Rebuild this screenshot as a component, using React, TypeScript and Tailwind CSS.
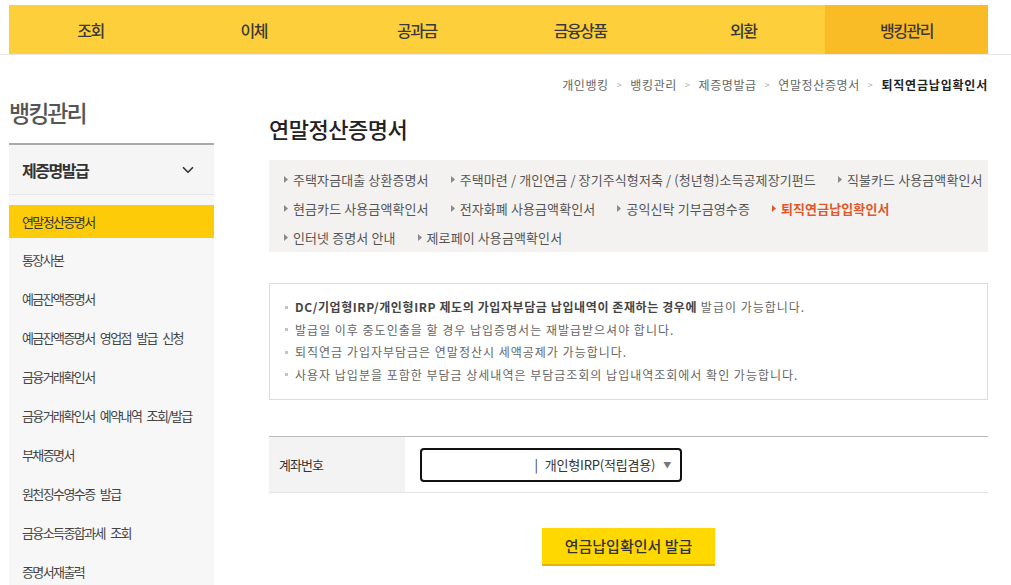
import { ChevronDown } from "lucide-react";

const navTabs = ["조회", "이체", "공과금", "금융상품", "외환", "뱅킹관리"];

const crumbs = ["개인뱅킹", "뱅킹관리", "제증명발급", "연말정산증명서"];

const sideMenu = [
  "통장사본",
  "예금잔액증명서",
  "예금잔액증명서 영업점 발급 신청",
  "금융거래확인서",
  "금융거래확인서 예약내역 조회/발급",
  "부채증명서",
  "원천징수영수증 발급",
  "금융소득종합과세 조회",
  "증명서재출력",
];

const certRows: string[][] = [
  ["주택자금대출 상환증명서", "주택마련 / 개인연금 / 장기주식형저축 / (청년형)소득공제장기펀드", "직불카드 사용금액확인서"],
  ["현금카드 사용금액확인서", "전자화폐 사용금액확인서", "공익신탁 기부금영수증", "퇴직연금납입확인서"],
  ["인터넷 증명서 안내", "제로페이 사용금액확인서"],
];

const notices = [
  "발급일 이후 중도인출을 할 경우 납입증명서는 재발급받으셔야 합니다.",
  "퇴직연금 가입자부담금은 연말정산시 세액공제가 가능합니다.",
  "사용자 납입분을 포함한 부담금 상세내역은 부담금조회의 납입내역조회에서 확인 가능합니다.",
];

function Arrow({ active }: { active?: boolean }) {
  return (
    <svg width="4" height="7" viewBox="0 0 4 7" className="shrink-0">
      <path d="M0 0 L4 3.5 L0 7 Z" fill={active ? "#e2582a" : "#8a8a8a"} />
    </svg>
  );
}

function Bullet() {
  return <span className="w-[3px] h-[3px] bg-[#c4c4c4] shrink-0" />;
}

export default function App() {
  return (
    <div className="w-[1011px] h-[585px] overflow-hidden bg-white text-[#333] font-['Noto_Sans_CJK_KR',sans-serif]">
      {/* top menu */}
      <div className="h-[55px] pt-[5px] border-b border-[#e8e8e8]">
        <nav className="ml-[9px] w-[979px] h-[49px] flex bg-[#fdd03b]">
          {navTabs.map((t) => (
            <div
              key={t}
              className={`flex-1 flex items-center justify-center text-[16px] font-medium tracking-[-1.5px] text-[#3a3a3a] ${
                t === "뱅킹관리" ? "bg-[#f9bb26]" : ""
              }`}
            >
              {t}
            </div>
          ))}
        </nav>
      </div>

      <div className="flex pl-[9px]">
        {/* sidebar */}
        <aside className="w-[205px] shrink-0">
          <h2 className="mt-[42px] h-[30px] leading-[30px] text-[23px] font-medium tracking-[-2px] text-[#555]">
            뱅킹관리
          </h2>
          <div className="mt-[16px] h-[52px] border-t-2 border-b border-t-[#a9a9a9] border-b-[#e6e6e6] bg-[#f5f5f5] flex items-center justify-between pl-[13px] pr-[17px]">
            <span className="text-[16px] font-bold tracking-[-1.5px] text-[#333]">제증명발급</span>
            <ChevronDown size={18} strokeWidth={2.2} color="#333" />
          </div>
          <ul className="bg-[#f7f7f7] pt-[10px] pb-[20px] text-[13px] tracking-[-1.6px] [word-spacing:4px]">
            <li className="h-[33px] bg-[#fdcb07] flex items-center pl-[13px] text-[#333]">
              연말정산증명서
            </li>
            <li className="h-[2px]" />
            {sideMenu.map((m) => (
              <li key={m} className="h-[39px] flex items-center pl-[13px] text-[#444]">
                {m}
              </li>
            ))}
          </ul>
        </aside>

        {/* main */}
        <main className="ml-[55px] w-[719px] shrink-0">
          <div className="pt-[19px] h-[40px] flex items-center justify-end gap-[8px] text-[12px] leading-[20px]">
            {crumbs.map((c) => (
              <span key={c} className="flex items-center gap-[8px] text-[#666] tracking-[0.6px]">
                {c}
                <span className="text-[9px] text-[#aaa]">&gt;</span>
              </span>
            ))}
            <span className="font-bold text-[#222] tracking-[0.8px]">퇴직연금납입확인서</span>
          </div>

          <h1 className="mt-[18px] h-[30px] leading-[30px] text-[22px] font-medium tracking-[-0.5px] text-[#222]">
            연말정산증명서
          </h1>

          <div className="mt-[17px] h-[92px] bg-[#f3f2f0] pt-[5px] pl-[15px]">
            {certRows.map((row, i) => (
              <div key={i} className="h-[29px] flex items-center gap-[22px] text-[13px] tracking-[0.1px] text-[#555]">
                {row.map((item) => {
                  const active = item === "퇴직연금납입확인서";
                  return (
                    <span key={item} className={`flex items-center gap-[5px] ${active ? "text-[#e2582a] font-bold" : ""}`}>
                      <Arrow active={active} />
                      {item}
                    </span>
                  );
                })}
              </div>
            ))}
          </div>

          <div className="mt-[31px] h-[117px] border border-[#dcdcdc] pt-[12px] pl-[15px] text-[12px] text-[#666]">
            <p className="h-[22.5px] flex items-center gap-[7px]">
              <Bullet />
              <span className="tracking-[1px]">
                <b className="font-bold text-[#444] tracking-[0.6px]">DC/기업형IRP/개인형IRP 제도의 가입자부담금 납입내역이 존재하는 경우에</b> 발급이 가능합니다.
              </span>
            </p>
            {notices.map((n) => (
              <p key={n} className="h-[22.5px] flex items-center gap-[7px]">
                <Bullet />
                <span className="tracking-[1px]">{n}</span>
              </p>
            ))}
          </div>

          <div className="mt-[36px] h-[57px] border-t border-b border-t-[#b9b9b9] border-b-[#e2e2e2] flex">
            <div className="w-[136px] bg-[#f3f3f3] flex items-center pl-[10px] text-[13px] tracking-[-1px] text-[#333]">
              계좌번호
            </div>
            <div className="flex items-center pl-[15px]">
              <div className="w-[262px] h-[34px] border-2 border-[#111] rounded-[4px] flex items-center justify-end pr-[9px] gap-[8px] text-[13px] tracking-[-0.2px] text-[#333]">
                <span className="flex items-center gap-[7px]">
                  <span>|</span>
                  <span>개인형IRP(적립겸용)</span>
                </span>
                <span className="text-[8px] text-[#777]">▼</span>
              </div>
            </div>
          </div>

          <div className="mt-[35px] flex justify-center">
            <button className="w-[173px] h-[38px] bg-[#ffd800] border-b-2 border-[#e9b400] text-[15px] font-medium text-[#333]">
              연금납입확인서 발급
            </button>
          </div>
        </main>
      </div>
    </div>
  );
}
